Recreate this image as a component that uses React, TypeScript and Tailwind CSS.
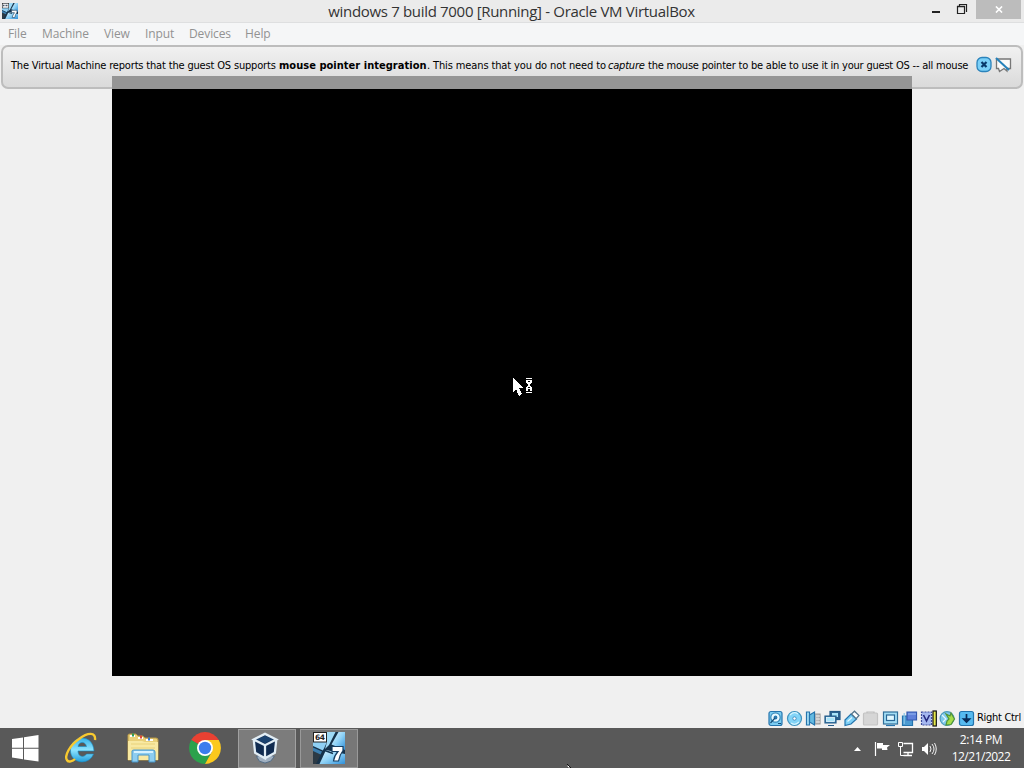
import type { ReactNode } from 'react'

const menus = [
  { label: 'File', cls: 'w-[34px]' },
  { label: 'Machine', cls: 'w-[62px]' },
  { label: 'View', cls: 'w-[41px]' },
  { label: 'Input', cls: 'w-[44px]' },
  { label: 'Devices', cls: 'w-[56px]' },
  { label: 'Help', cls: 'w-[40px]' },
]

function Seven({ size, badge }: { size: number; badge?: boolean }) {
  return (
    <svg width={size} height={size} viewBox="0 0 32 32">
      <defs>
        <linearGradient id="pane" x1="0" y1="0" x2="1" y2="1">
          <stop offset="0" stopColor="#e2f6ff" />
          <stop offset=".5" stopColor="#8fd2f6" />
          <stop offset="1" stopColor="#2f8fd8" />
        </linearGradient>
      </defs>
      <rect width="32" height="32" fill="#16324a" />
      <path d="M0 10H14L10 18.5L0 14Z" fill="#8fd0f4" />
      <path d="M14 0H22.5L16 13L12 17L14 10Z" fill="#9fdaf6" />
      <path d="M25.5 0H32V18L18.5 12.5Z" fill="url(#pane)" />
      <path d="M0 18L8 22L3 32H0Z" fill="#2c3a45" />
      <path d="M0 15.5L9 19.5L7.5 22.5L0 19Z" fill="#3c7fb0" />
      <path d="M13 18L32 22V32H6.5Z" fill="url(#pane)" />
      <path d="M10.5 18L20 21.5" stroke="#123450" strokeWidth="1.6" />
      <path d="M19 14.5H30V18.5Q26.5 23 25.5 29H20.5Q21 24 25 19.5H19Z" fill="#fff" stroke="#173f63" strokeWidth="1.2" />
      <rect x=".5" y=".5" width="13" height="9.5" fill="#fff" stroke="#222" />
      {badge && <text x="2" y="8" fontFamily="DejaVu Sans, sans-serif" fontSize="7.5" fontWeight="bold" textLength="10" fill="#222">64</text>}
      {!badge && <path d="M2 5H5M7 5H11" stroke="#456" strokeWidth="3" />}
    </svg>
  )
}

function StatusIcon({ children }: { children: ReactNode }) {
  return (
    <svg className="shrink-0" width="17" height="17" viewBox="0 0 17 17" fill="#b6e6fb" stroke="#2474ad" strokeWidth="1.2">
      {children}
    </svg>
  )
}

function StatusBar() {
  return (
    <div className="flex h-[20px] items-center gap-[2.1px] pl-[767px] font-['DejaVu_Sans_Condensed','DejaVu_Sans',sans-serif] text-[11px] text-black">
      <StatusIcon>
        <rect x="2" y="1.5" width="13" height="14" rx="2" fill="#7bcdf3" />
        <circle cx="8.5" cy="7.5" r="4.7" fill="#e6f8ff" stroke="#3889ba" />
        <circle cx="8.5" cy="7.5" r="1.3" fill="#287bad" />
        <path d="M3.5 13L8 8M11 13.5H14" stroke="#174d77" />
      </StatusIcon>
      <StatusIcon>
        <circle cx="8.5" cy="8.5" r="7" fill="#83d4f7" stroke="#3e91bd" />
        <path d="M4 5Q8 1 12 4M5 13Q9 16 13 12" stroke="#d4f4ff" fill="none" />
        <circle cx="8.5" cy="8.5" r="1.7" fill="#fff" strokeWidth=".7" />
      </StatusIcon>
      <StatusIcon>
        <path d="M9 4H15V14H9Z" fill="#b9b9b9" stroke="#999" />
        <path d="M11 6H15M11 9H15M11 12H15" stroke="#eee" />
        <path d="M1.5 2H4.5V15H1.5Z" fill="#a9e0f7" />
        <path d="M4.5 5L9.5 2V15L4.5 12Z" fill="#65bbe2" />
      </StatusIcon>
      <StatusIcon>
        <rect x="6" y="1.5" width="10" height="8" fill="#2d6292" stroke="#235a88" />
        <rect x="8" y="3" width="6" height="4" fill="#a9e4fa" stroke="none" />
        <path d="M1 6H12V13H1ZM4 15.5H10" fill="#3c7fae" stroke="#235a88" />
        <rect x="2.5" y="7.5" width="8" height="4" fill="#a9e4fa" stroke="#e8f8ff" strokeWidth=".8" />
      </StatusIcon>
      <StatusIcon>
        <path d="M2 10L8 4L13.5 9L8 14L2 15.5Z" fill="#7dcff5" />
        <path d="M8.5 4L11.5 1.2L16 5.5L13.2 8.7Z" fill="#fff" stroke="#55748a" />
        <path d="M4.5 11.5L9 7.5" stroke="#e6f8ff" />
      </StatusIcon>
      <StatusIcon>
        <rect x="1.5" y="3" width="14" height="12" rx="1" fill="#d6d6d6" stroke="#c3c3c3" />
        <path d="M5 3V2H12V3" stroke="#bdbdbd" fill="none" />
      </StatusIcon>
      <StatusIcon>
        <rect x="1.5" y="2" width="14" height="12" fill="#a4def5" stroke="#316f9a" />
        <rect x="4.5" y="5" width="8" height="5.5" fill="#e2f8ff" stroke="#286796" />
        <path d="M4 15.5H13" />
      </StatusIcon>
      <StatusIcon>
        <path d="M1.5 6H11.5V15.5H1.5Z" fill="#4c9bd2" />
        <path d="M3.2 3V14" stroke="#88c6e8" />
        <path d="M6 2H15.5V10H6Z" fill="#5f80da" stroke="#3358ad" />
        <path d="M7 4H15" stroke="#8dafed" />
      </StatusIcon>
      <StatusIcon>
        <rect x="1.5" y="2" width="10" height="13" fill="#a5b8f0" stroke="#3f4c9c" strokeDasharray="2 1" />
        <path d="M3.5 5L6.5 11L9.5 5" fill="none" stroke="#25297f" strokeWidth="1.6" />
        <rect x="13" y="1" width="3.3" height="15" fill="#e4e84a" stroke="#111" />
      </StatusIcon>
      <StatusIcon>
        <circle cx="8" cy="8.5" r="6.9" fill="#80c9ec" stroke="#4c9abd" />
        <path d="M7 4L11 6L12 3L15.5 9L12 14.5L7 15L8 11L10 9Z" fill="#a4dd4a" stroke="#509338" />
        <path d="M3 5L7 9L4 12" stroke="#e4f7ff" fill="none" />
      </StatusIcon>
      <StatusIcon>
        <rect x="1.5" y="1.5" width="14" height="14" rx="2" fill="#56baf0" />
        <path d="M8.5 4V12M5.5 9L8.5 12L11.5 9Z" fill="#082b58" stroke="#082b58" strokeWidth="1.7" />
      </StatusIcon>
      <span className="pt-px tracking-[-0.3px] whitespace-nowrap">Right Ctrl</span>
    </div>
  )
}

function Taskbar() {
  return (
    <footer className="flex h-10 items-center bg-[#595959] text-white">
      <div className="flex w-[50px] justify-center">
        <svg width="27" height="27" viewBox="0 0 27 27" fill="#fff">
          <path d="M0 4L11 2.4V12.7H0ZM12 2.2L26.5 0V12.7H12ZM0 13.7H11V24.2L0 22.6ZM12 13.7H26.5V26.5L12 24.4Z" />
        </svg>
      </div>
      <div className="flex w-[62px] justify-center pb-px">
        <svg width="32" height="32" viewBox="0 0 32 32">
          <defs>
            <linearGradient id="ie" x1="0" y1="0" x2="0" y2="1">
              <stop stopColor="#38b3e9" />
              <stop offset=".5" stopColor="#8ee4ff" />
              <stop offset="1" stopColor="#229edb" />
            </linearGradient>
          </defs>
          <path d="M29 19H13C13 25 19 26 21.5 22H28.5C24 34 5 32 5.5 18C6 3 28 1 29 19ZM13 14.5H21.5C20.5 9 14 9 13 14.5Z" fill="url(#ie)" stroke="#168dc7" strokeWidth=".6" />
          <path d="M30 8C31 0 23 0 14 7C5 13-1 24 2 28C3 31 8 29 10 27" fill="none" stroke="#f8c92f" strokeWidth="2.4" />
        </svg>
      </div>
      <div className="flex w-[62px] justify-center">
        <svg width="34" height="30" viewBox="0 0 34 30">
          <path d="M2 2Q2 1 4 1H10L12 3H17L19 5H30Q32 5 32 7V27H2Z" fill="#e9d078" stroke="#b69746" />
          <path d="M4 3H9M12 5H17M20 7H27" stroke="#fff" strokeWidth="2" />
          <path d="M6 2H8" stroke="#2d9d58" strokeWidth="3" />
          <path d="M14 4H16" stroke="#df4939" strokeWidth="3" />
          <path d="M22 6H24" stroke="#367bd0" strokeWidth="3" />
          <path d="M2 8H16L19 9H32V27H2Z" fill="#f8e9a2" />
          <path d="M5 11H29M5 15H29" stroke="#e9d27b" />
          <path d="M6 29V18Q6 17 8 17H27Q29 17 29 19V29H23V22H12V29Z" fill="#8dcdf0" stroke="#4794c7" />
          <path d="M8 19H27" stroke="#d6f2ff" strokeWidth="2" />
        </svg>
      </div>
      <div className="flex w-[63px] justify-center pr-0.5">
        <svg width="32" height="32" viewBox="0 0 32 32">
          <path d="M16 16L2.2 8A16 16 0 0 1 29.8 8Z" fill="#e94132" />
          <path d="M16 16L2.2 8A16 16 0 0 0 16 32L22.5 20Z" fill="#2ba24c" />
          <path d="M16 8H29.8A16 16 0 0 1 16 32L23 19.5Z" fill="#fbc91d" />
          <circle cx="16" cy="16" r="8" fill="#fff" />
          <circle cx="16" cy="16" r="6.2" fill="#3b7ded" />
        </svg>
      </div>
      <div className="ml-px flex h-[39px] w-[58px] items-center justify-center border border-[#a1a1a1] bg-[#7c7c7c] pr-1">
        <svg width="28" height="32" viewBox="0 0 28 34">
          <path d="M5 26L14 23L24 26L20 31L14 33L8 31Z" fill="#9fafc0" stroke="#506a83" />
          <path d="M14 2L26 8L24.5 22L14 28L3.5 22L2 8Z" fill="#102b50" />
          <path d="M5 8L14 4L23 8L14 12Z" fill="#1a426f" />
          <path d="M14 2L26 8L14 14L2 8ZM2 8L3.5 22L14 28V14M14 28L24.5 22L26 8" fill="none" stroke="#e1edf5" strokeWidth="2.4" />
        </svg>
      </div>
      <div className="ml-[4px] flex h-[39px] w-[58px] items-center justify-center border border-[#999] bg-[#777]">
        <Seven size={32} badge />
      </div>
      <div className="ml-auto flex items-center">
        <svg className="mt-px" width="90" height="24" viewBox="0 0 90 24" fill="none" stroke="#fff">
          <path d="M5 14L8.5 10L12 14Z" fill="#fff" stroke="none" />
          <path d="M26.5 5V19" strokeWidth="1.2" />
          <path d="M28 6H34V8H41L38 10.5L38.5 13H33V11.5H28Z" fill="#fff" stroke="none" />
          <path d="M54.5 6.5H63.5V15.5H54.5M59 16V18.5M54.5 18.5H63" strokeWidth="1.3" />
          <path d="M49.5 5.5H53.5V9.5H49.5ZM51.5 10V18.5H55" />
          <path d="M73 10H75L79 6V18L75 14H73Z" fill="#fff" stroke="none" />
          <path d="M81 9Q83 12 81 15M83 7Q87 12 83 17M85.5 6Q89 12 85.5 18" strokeWidth=".9" />
        </svg>
        <div className="mr-[10px] ml-[9px] w-[66px] text-center font-['Open_Sans',sans-serif] text-xs leading-[17px] whitespace-nowrap">
          <div className="tracking-[-0.35px]">2:14 PM</div>
          <div className="tracking-[-0.5px]">12/21/2022</div>
        </div>
      </div>
    </footer>
  )
}

export default function App() {
  return (
    <div className="relative flex h-[768px] w-[1024px] flex-col overflow-hidden bg-[#f0f0f0]">
      <header className="flex h-[23px] shrink-0 items-start border-b border-[#dedfe0] bg-[#ebebeb]">
        <div className="w-[150px] pt-[3px] pl-[2px]">
          <Seven size={16} />
        </div>
        <h1 className="flex-1 pl-[22px] text-center font-['Open_Sans',sans-serif] text-[15px] leading-[23px] tracking-[-0.32px] whitespace-nowrap text-[#333]">
          windows 7 build 7000 [Running] - Oracle VM VirtualBox
        </h1>
        <div className="flex w-[173px] shrink-0 justify-end pr-[3px]">
          <svg width="40" height="19" viewBox="0 0 40 19" fill="none" stroke="#222">
            <path d="M0 12H8" strokeWidth="2" />
            <path d="M25.5 6.5H32.5V13.5H25.5ZM27.5 6V4.5H34.5V12" strokeWidth="1.2" />
            <path d="M25 6.5H33" strokeWidth="1.5" />
          </svg>
          <div className="ml-1 flex h-[19px] w-[45px] items-center justify-center bg-[#bcbcbc]">
            <svg width="8" height="7" viewBox="0 0 9 8" stroke="#fff" strokeWidth="1.8">
              <path d="M1 .5L8 7.5M8 .5L1 7.5" />
            </svg>
          </div>
        </div>
      </header>
      <nav className="flex h-[22px] shrink-0 items-center bg-[#f5f6f7] pl-2 font-['Open_Sans',sans-serif] text-xs tracking-[-0.1px] text-[#929292]">
        {menus.map(m => <span key={m.label} className={m.cls}>{m.label}</span>)}
      </nav>
      <section className="mx-px flex h-[44px] shrink-0 items-start rounded-[7px] border-2 border-[#bdbdbd] bg-gradient-to-b from-[#f1f1f1] to-[#dadada] pt-[9px] pl-2 font-['DejaVu_Sans_Condensed','DejaVu_Sans',sans-serif] text-[11px] leading-[19px] text-black">
        <p className="flex w-[965px] shrink-0 whitespace-pre">
          <span className="w-[268px] tracking-[-0.17px]">The Virtual Machine reports that the guest OS supports</span>
          <b className="w-[148px] tracking-[0.03px]">mouse pointer integration</b>
          <span className="w-[181px] tracking-[-0.12px]">. This means that you do not need to</span>
          <i className="w-[40px] tracking-[-0.2px]">capture</i>
          <span className="tracking-[-0.21px]">the mouse pointer to be able to use it in your guest OS -- all mouse</span>
        </p>
        <svg className="shrink-0" width="36" height="18" viewBox="0 0 36 18">
          <rect x="1" y="1.5" width="14" height="14" rx="5" fill="#7bd0f8" stroke="#2b83bb" strokeWidth="1.3" />
          <path d="M5.5 6L10.5 11M10.5 6L5.5 11" stroke="#09396b" strokeWidth="2.2" />
          <path d="M20.5 3H34.5V12.5H31V15L28 12.5L23.5 15.5L22.5 12.5H20.5Z" fill="#fafafa" stroke="#777" strokeWidth="1.3" />
          <path d="M20 2L33 14" stroke="#2582bb" strokeWidth="2" />
        </svg>
      </section>
      <main className="mx-auto flex h-[587px] w-[800px] shrink-0 items-start bg-black pt-[288px] pl-[400px]">
        <svg width="24" height="22" viewBox="0 0 24 22" fill="#fff" shapeRendering="crispEdges">
          <path d="M1 1L11 11H7L10 17L7 19L4 12L1 15Z" />
          <path d="M14 1H20V2H14ZM14 15H20V16H14Z" />
          <path d="M14 3H20V5L18 8H16L14 5ZM16 8H18L20 11V14H18V12H16V14H14V11Z" />
          <path d="M16 4H18V5H16ZM16 10H18V11H16Z" fill="#000" />
        </svg>
      </main>
      <div className="flex h-[52px] shrink-0 items-end">
        <StatusBar />
      </div>
      <Taskbar />
      {/* guest display's top edge shows through the message bar */}
      <div className="absolute top-[76px] left-[112px] h-[13px] w-[800px] bg-[#959595]" />
      <svg className="absolute top-[764px] left-[567px]" width="4" height="4" viewBox="0 0 4 4">
        <path d="M0 0L4 4H0Z" fill="#fff" stroke="#111" />
      </svg>
    </div>
  )
}
